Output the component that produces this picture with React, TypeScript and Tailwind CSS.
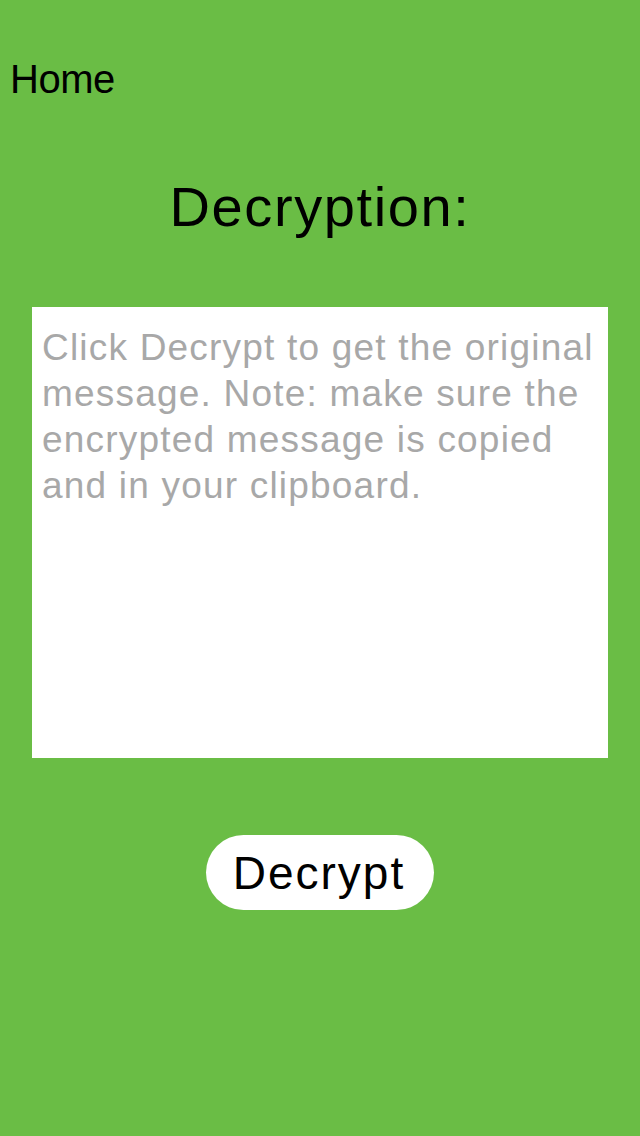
import React from 'react';

const App: React.FC = () => {
  return (
    <div className="min-h-[1136px] w-[640px] bg-[#6abd45] font-['Liberation_Sans',Arial,sans-serif] text-black">
      <div className="pt-[55px] pl-[10px]">
        <span className="text-[40px] leading-[48px] tracking-[-0.5px]">Home</span>
      </div>
      <h1 className="mt-[72px] text-center text-[56px] leading-[64px] tracking-[1.6px]">Decryption:</h1>
      <div className="mx-[32px] mt-[68px] h-[451px] bg-white pl-[10px] pt-[18px]">
        <p className="text-[37px] leading-[46px] tracking-[1.2px] text-[#a8a8a8] whitespace-nowrap">
          Click Decrypt to get the original
          <br />
          message. Note: make sure the
          <br />
          encrypted message is copied
          <br />
          and in your clipboard.
        </p>
      </div>
      <div className="mt-[77px] flex justify-center">
        <button className="h-[75px] w-[228px] rounded-full bg-white pr-[2px] text-[46px] leading-none tracking-[2px]">Decrypt</button>
      </div>
    </div>
  );
};

export default App;
